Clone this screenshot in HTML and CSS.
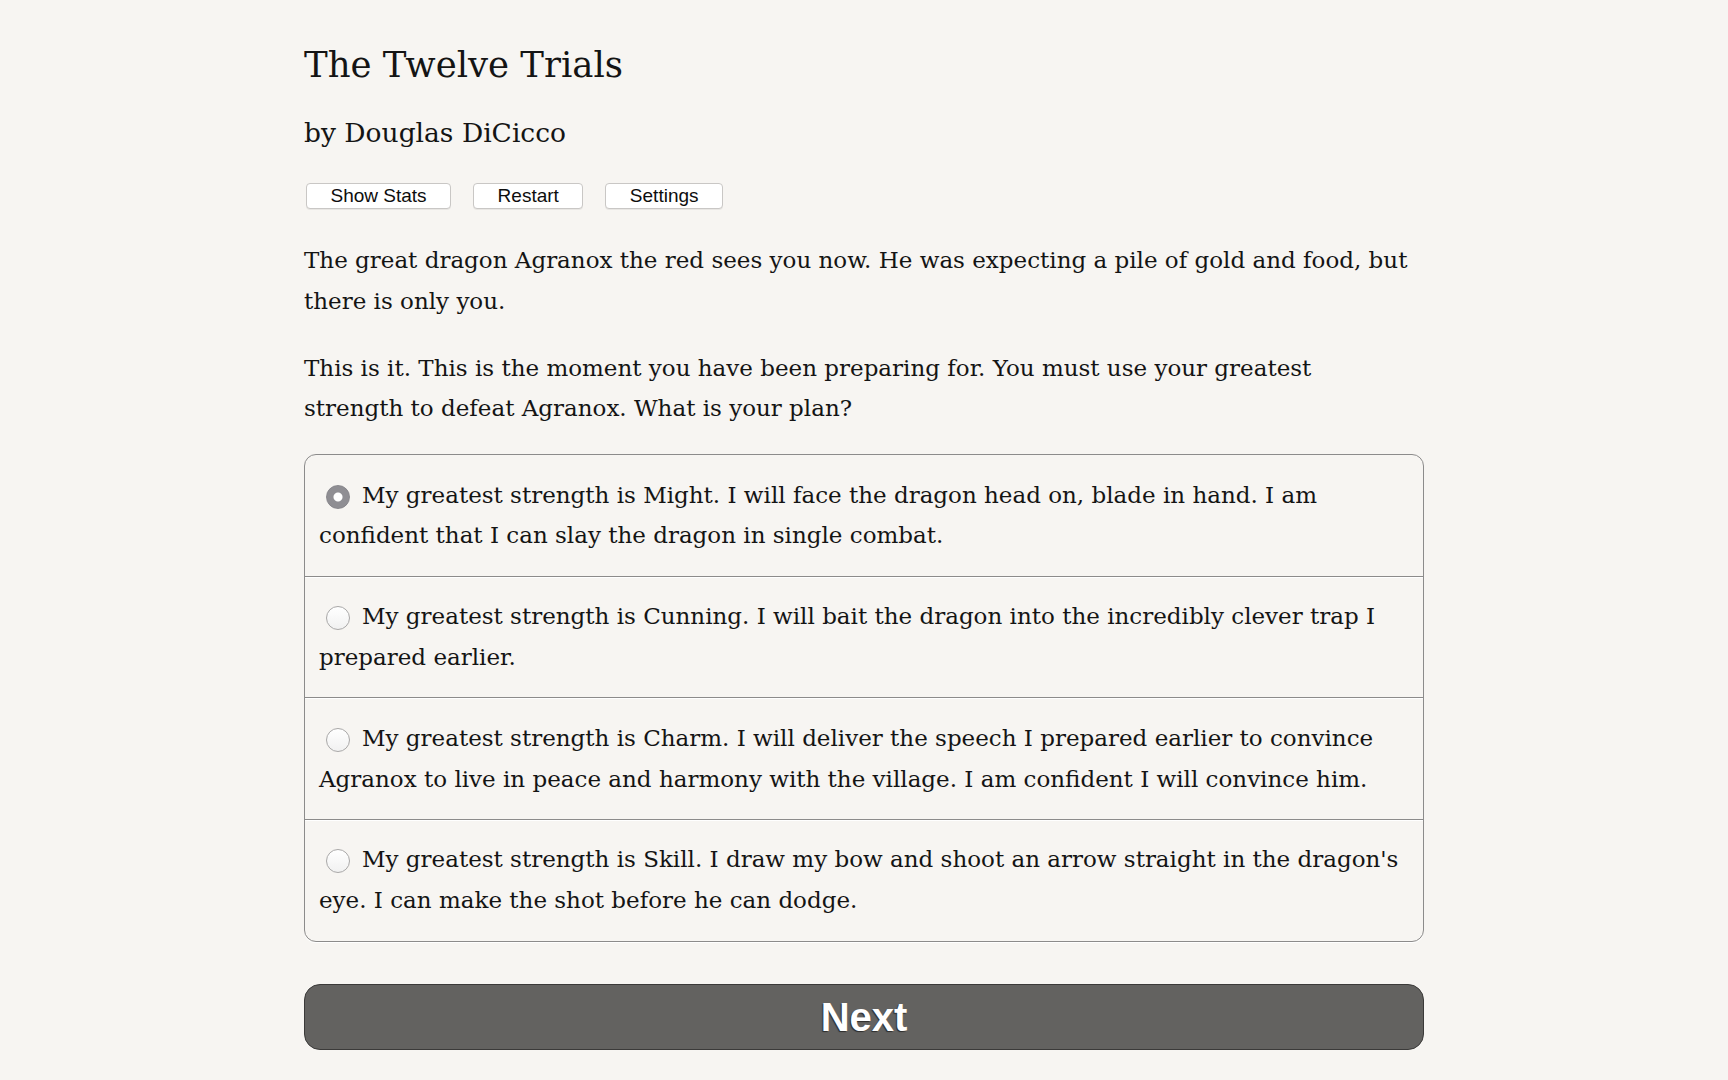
FILE: index.html
```html
<!DOCTYPE html>
<html lang="en">
<head>
<meta charset="utf-8">
<title>The Twelve Trials</title>
<link rel="stylesheet" href="styles.css">
</head>
<body>
<main class="page">
  <h1 class="title">The Twelve Trials</h1>
  <h2 class="byline">by Douglas DiCicco</h2>
  <div class="toolbar">
    <button class="tool-btn" type="button">Show Stats</button>
    <button class="tool-btn" type="button">Restart</button>
    <button class="tool-btn" type="button">Settings</button>
  </div>
  <p class="story">The great dragon Agranox the red sees you now. He was expecting a pile of gold and food, but there is only you.</p>
  <p class="story">This is it. This is the moment you have been preparing for. You must use your greatest strength to defeat Agranox. What is your plan?</p>
  <form class="choices">
    <label class="choice"><span class="radio radio-on"></span>My greatest strength is Might. I will face the dragon head on, blade in hand. I am confident that I can slay the dragon in single combat.</label>
    <label class="choice"><span class="radio"></span>My greatest strength is Cunning. I will bait the dragon into the incredibly clever trap I prepared earlier.</label>
    <label class="choice"><span class="radio"></span>My greatest strength is Charm. I will deliver the speech I prepared earlier to convince Agranox to live in peace and harmony with the village. I am confident I will convince him.</label>
    <label class="choice"><span class="radio"></span>My greatest strength is Skill. I draw my bow and shoot an arrow straight in the dragon's eye. I can make the shot before he can dodge.</label>
  </form>
  <button class="next-btn" type="button">Next</button>
</main>
</body>
</html>
```
FILE: styles.css
```css
html, body {
  margin: 0;
  padding: 0;
  background: #f7f5f2;
}

body {
  color: #141414;
  font-family: "DejaVu Serif", Georgia, serif;
}

.page {
  width: 1120px;
  margin: 0 auto;
  padding-top: 43px;
  padding-bottom: 30px;
}

.title {
  margin: 0;
  font-size: 35.5px;
  line-height: 44px;
  font-weight: normal;
}

.byline {
  margin: 28px 0 0 0;
  font-size: 26.5px;
  line-height: 36px;
  font-weight: normal;
}

.toolbar {
  display: flex;
  gap: 22px;
  margin-top: 32px;
  padding-left: 2px;
}

.tool-btn {
  height: 26px;
  padding: 0 23.5px;
  border: 1px solid #c9c7c5;
  border-radius: 4px;
  background: #ffffff;
  box-shadow: 0 1px 0 rgba(0, 0, 0, 0.06);
  font-family: "Liberation Sans", Arial, sans-serif;
  font-size: 19px;
  line-height: 24px;
  color: #0d0d0d;
}

.story {
  margin: 31px 0 0 0;
  padding-right: 12px;
  font-size: 23px;
  line-height: 40.8px;
}

.story + .story {
  margin-top: 26px;
}

.choices {
  margin: 25px 0 0 0;
  border: 1px solid #8c8b8b;
  border-radius: 12px;
  box-shadow: 0 1px 0 #ffffff;
  display: flex;
  flex-direction: column;
}

.choice {
  display: block;
  padding: 19.5px 6px 19.5px 14px;
  font-size: 23px;
  line-height: 40.8px;
}

.choice + .choice {
  border-top: 1px solid #8c8b8b;
  box-shadow: inset 0 1px 0 #ffffff;
}

.radio {
  display: inline-block;
  box-sizing: border-box;
  width: 24px;
  height: 24px;
  margin: 0 12px 0 7px;
  border: 1px solid #a9a8a8;
  border-radius: 50%;
  background: linear-gradient(#ffffff, #f1f1f1);
  vertical-align: -6px;
}

.radio-on {
  border-color: #88878c;
  background: radial-gradient(circle, #ffffff 0, #ffffff 4px, #8f8e93 5px);
}

.next-btn {
  display: block;
  width: 100%;
  height: 66px;
  margin-top: 42px;
  border: 1px solid #3b3a39;
  border-radius: 16px;
  background: #636260;
  color: #ffffff;
  font-family: "Liberation Sans", Arial, sans-serif;
  font-weight: bold;
  font-size: 40px;
  line-height: 62px;
  text-shadow: -1px 1px 1px rgba(0, 0, 0, 0.55);
}
```
